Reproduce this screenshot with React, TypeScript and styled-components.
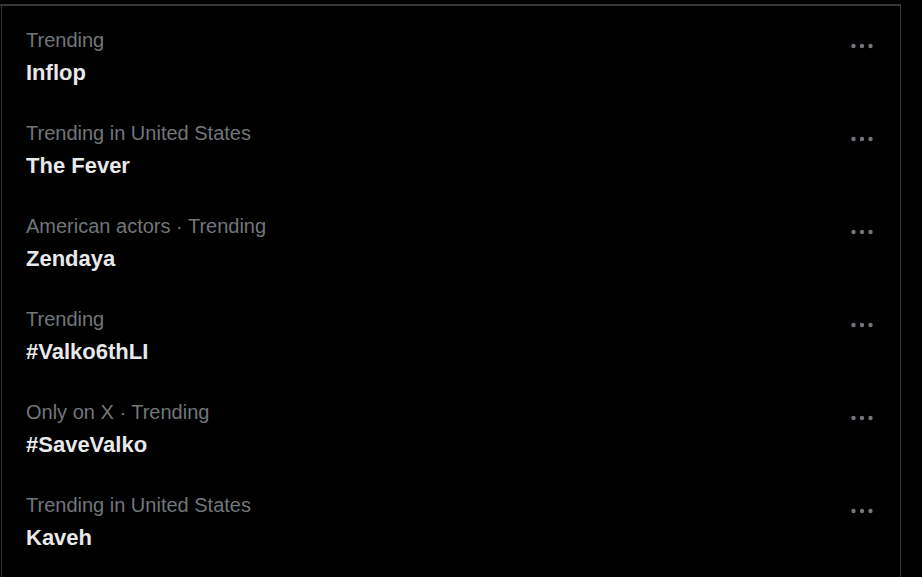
import styled, { createGlobalStyle } from "styled-components";

const GlobalStyle = createGlobalStyle`
  html, body {
    margin: 0;
    padding: 0;
    background: #000;
  }
  body {
    font-family: "Liberation Sans", Arial, sans-serif;
    overflow: hidden;
  }
`;

const Panel = styled.section`
  margin-top: 4px;
  width: 901px;
  border-top: 2px solid #333639;
`;

const List = styled.div`
  margin-left: 1px;
  width: 898px;
  height: 571px;
  border-left: 1px solid #2f3336;
  border-right: 1px solid #2f3336;
  padding-top: 4px;
  overflow: hidden;
`;

const Row = styled.div`
  display: flex;
  justify-content: space-between;
  align-items: flex-start;
  height: 93px;
  box-sizing: border-box;
  padding: 18px 26px 0 24px;
`;

const Texts = styled.div`
  display: flex;
  flex-direction: column;
`;

const Context = styled.span`
  color: #71767b;
  font-size: 20px;
  line-height: 24px;
`;

const Topic = styled.span`
  margin-top: 6px;
  color: #e7e9ea;
  font-size: 22px;
  font-weight: 700;
  line-height: 30px;
`;

const MoreButton = styled.button`
  background: none;
  border: 0;
  padding: 0;
  margin-top: 14px;
  width: 24px;
  height: 8px;
  display: flex;
  cursor: pointer;
`;

const trends = [
  { context: "Trending", topic: "Inflop" },
  { context: "Trending in United States", topic: "The Fever" },
  { context: "American actors · Trending", topic: "Zendaya" },
  { context: "Trending", topic: "#Valko6thLI" },
  { context: "Only on X · Trending", topic: "#SaveValko" },
  { context: "Trending in United States", topic: "Kaveh" },
];

const Dots = () => (
  <svg width="24" height="8" viewBox="0 0 24 8">
    <circle cx="3.5" cy="4" r="2.2" fill="#71767b" />
    <circle cx="12" cy="4" r="2.2" fill="#71767b" />
    <circle cx="20.5" cy="4" r="2.2" fill="#71767b" />
  </svg>
);

export default function App() {
  return (
    <>
      <GlobalStyle />
      <Panel>
        <List>
          {trends.map((t) => (
            <Row key={t.topic}>
              <Texts>
                <Context>{t.context}</Context>
                <Topic>{t.topic}</Topic>
              </Texts>
              <MoreButton aria-label="More">
                <Dots />
              </MoreButton>
            </Row>
          ))}
        </List>
      </Panel>
    </>
  );
}
